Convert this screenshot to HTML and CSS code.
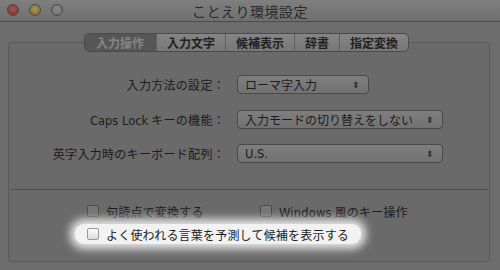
FILE: index.html
```html
<!DOCTYPE html>
<html lang="ja">
<head>
    <meta charset="UTF-8">
    <title>ことえり環境設定</title>
    <link rel="stylesheet" href="styles.css">
</head>
<body>
    <div class="window">
        <!-- Title bar -->
        <div class="titlebar">
            <div class="lights">
                <span class="light red"></span>
                <span class="light yellow"></span>
                <span class="light gray"></span>
            </div>
            <div class="title">ことえり環境設定</div>
            <div></div>
        </div>

        <!-- Tabs -->
        <div class="tabs">
            <span class="tab selected">入力操作</span>
            <span class="tab">入力文字</span>
            <span class="tab">候補表示</span>
            <span class="tab">辞書</span>
            <span class="tab">指定変換</span>
        </div>

        <div class="panel">
            <div class="settings">
                <label>入力方法の設定：</label>
                <div class="popup short"><span>ローマ字入力</span><span class="arrows">⬍</span></div>

                <label><span class="latin">Caps Lock</span> キーの機能：</label>
                <div class="popup"><span>入力モードの切り替えをしない</span><span class="arrows">⬍</span></div>

                <label>英字入力時のキーボード配列：</label>
                <div class="popup"><span class="latin">U.S.</span><span class="arrows">⬍</span></div>
            </div>

            <hr class="separator">

            <div class="checks">
                <div class="check-row">
                    <div class="check first"><span class="box"></span><span>句読点で変換する</span></div>
                    <div class="check"><span class="box"></span><span><span class="latin">Windows</span> 風のキー操作</span></div>
                </div>
                <div class="check-row">
                    <div class="check highlight"><span class="box"></span><span>よく使われる言葉を予測して候補を表示する</span></div>
                </div>
            </div>
        </div>
    </div>
</body>
</html>
```

FILE: styles.css
```css
* {
    margin: 0;
    padding: 0;
    box-sizing: border-box;
}

body {
    width: 500px;
    height: 270px;
    overflow: hidden;
    background-color: #6c6c6c;
    font-family: "Noto Sans CJK JP", "Liberation Sans", sans-serif;
    color: #1c1c1c;
}

.window {
    width: 500px;
    height: 270px;
    background-color: #6c6c6c;
}

/* Latin runs look like Lucida Grande */
.latin {
    font-family: "DejaVu Sans", sans-serif;
    font-size: 11.5px;
}

/* Title bar */
.titlebar {
    height: 22px;
    display: grid;
    grid-template-columns: 1fr auto 1fr;
    align-items: center;
    background: linear-gradient(#7f7f7f, #6f6f6f);
    border-bottom: 1px solid #4c4c4c;
}

.lights {
    display: flex;
    gap: 10px;
    padding-left: 7px;
    margin-top: -2px;
}

.light {
    width: 12px;
    height: 12px;
    border-radius: 50%;
    border: 1px solid #4a4a4a;
}

.red { background: radial-gradient(circle at 50% 40%, #a8544e, #7a2e2a); }
.yellow { background: radial-gradient(circle at 50% 40%, #a99458, #7c6530); }
.gray { background: radial-gradient(circle at 50% 40%, #8a8a8a, #6c6c6c); }

.title {
    font-size: 14px;
    color: #2a2a2a;
    letter-spacing: 0.5px;
}

/* Tabs */
.tabs {
    display: flex;
    margin: 11px 0 0 84px;
    width: fit-content;
    height: 19px;
    border: 1px solid #4a4a4a;
    border-radius: 5px;
    overflow: hidden;
    position: relative;
    z-index: 1;
    background: linear-gradient(#858585, #777);
}

.tab {
    font-size: 12px;
    font-weight: bold;
    line-height: 17px;
    padding: 0 10px;
    color: #222;
    border-left: 1px solid #5e5e5e;
}

.tab:first-child { border-left: none; }

.tab.selected {
    background: #565656;
    color: #858585;
    width: 71px;
    padding: 0 0 0 11px;
}

/* Group box */
.panel {
    margin: -10px 10px 0 8px;
    height: 220px;
    border: 1px solid #5a5a5a;
    border-radius: 3px;
    background-color: #6a6a6a;
    padding-top: 32px;
}

.settings {
    display: grid;
    grid-template-columns: 216px auto;
    column-gap: 12px;
    row-gap: 15.5px;
    align-items: center;
    justify-items: start;
}

.settings label {
    justify-self: end;
    font-size: 12px;
    letter-spacing: 0.3px;
}

.settings label .latin {
    letter-spacing: 0;
}

.popup {
    height: 19px;
    width: 206px;
    display: flex;
    justify-content: space-between;
    align-items: center;
    padding: 0 8px 0 7px;
    font-size: 12px;
    border: 1px solid #4a4a4a;
    border-radius: 4px;
    background: linear-gradient(#7e7e7e, #727272);
}

.popup.short { width: 132px; }

.arrows {
    font-size: 9px;
    color: #333;
}

.separator {
    border: none;
    border-top: 1px solid #4e4e4e;
    margin: 26px 1px 0 1px;
}

.checks {
    padding: 13px 0 0 78px;
    display: flex;
    flex-direction: column;
    gap: 5px;
}

.check-row {
    display: flex;
}

.check {
    display: flex;
    align-items: center;
    gap: 7px;
    font-size: 12px;
    height: 16px;
    letter-spacing: 0.2px;
}

.check.first {
    width: 173px;
}

.box {
    width: 12px;
    height: 12px;
    border: 1px solid #4a4a4a;
    border-radius: 2px;
    background: linear-gradient(#7a7a7a, #6e6e6e);
}

.highlight {
    background-color: #f2f2f2;
    border-radius: 9px;
    margin-left: -12px;
    padding: 0 12px;
    height: 20px;
    box-shadow: 0 0 8px 5px #e6e6e6;
}

.highlight .box {
    background: linear-gradient(#fafafa, #dcdcdc);
    border-color: #9a9a9a;
}
```
